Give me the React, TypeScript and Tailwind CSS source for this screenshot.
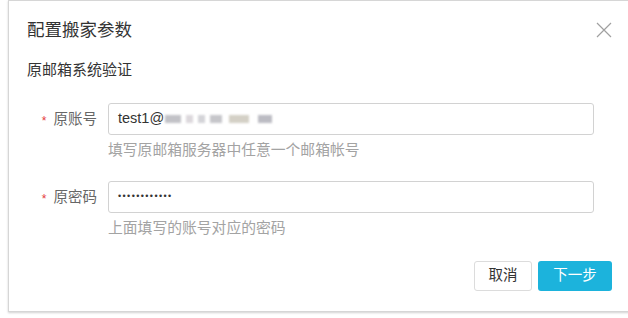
const font = "font-['Liberation_Sans','Noto_Sans_CJK_SC',sans-serif]";

function Field({
  label,
  hint,
  children,
}: {
  label: string;
  hint: string;
  children: React.ReactNode;
}) {
  return (
    <div>
      <div className="flex items-center">
        <div className="flex w-[71px] items-center justify-end gap-[7px] pr-px">
          <span className="mt-[3px] text-[12px] leading-none text-[#e4393c]">*</span>
          <span className="text-[14.5px] leading-5 text-[#666]">{label}</span>
        </div>
        <div className="ml-[10px] flex h-[32px] w-[486px] items-center rounded-[3px] border border-[#d2d2d2] bg-white px-[9px]">
          {children}
        </div>
      </div>
      <p className="ml-[81px] mt-[5px] text-[14.8px] leading-5 text-[#a3a3a3]">{hint}</p>
    </div>
  );
}

// blurred part of the sample address
const smudges = [
  { w: 'w-[16px]', c: 'bg-[#c2c2c7]' },
  { w: 'w-[7px]', c: 'bg-[#dcd8dc]' },
  { w: 'w-[7px]', c: 'bg-[#d4d4d8]' },
  { w: 'w-[12px]', c: 'bg-[#c6c6ca]' },
  { w: 'w-[20px]', c: 'bg-[#d4d0c6]' },
  { w: 'w-[14px]', c: 'bg-[#bcbcc3]' },
];

export default function App() {
  return (
    <div className={`h-[318px] w-[628px] overflow-hidden bg-white ${font}`}>
      <div className="ml-2 box-border h-[312px] w-[624px] border border-[#d6d6d6] bg-white pl-[18px] pr-[19px] pt-[17px] pb-[20px] shadow-[0_1px_2px_rgba(0,0,0,0.18)]">
        <div className="flex h-6 items-center justify-between">
          <h2 className="text-[17.5px] font-normal leading-6 text-[#333]">配置搬家参数</h2>
          <svg width="16" height="16" viewBox="0 0 16 16" className="text-[#a0a0a0]">
            <path d="M1 1L15 15M15 1L1 15" stroke="currentColor" strokeWidth="1.2" fill="none" />
          </svg>
        </div>

        <p className="mt-[18px] text-[15px] leading-5 text-[#333]">原邮箱系统验证</p>

        <div className="mt-[23px]">
          <Field label="原账号" hint="填写原邮箱服务器中任意一个邮箱帐号">
            <span className="text-[14.5px] text-[#333]">test1@</span>
            <span className="ml-px flex items-center gap-[5px] blur-[1px]">
              {smudges.map((s, i) => (
                <span key={i} className={`h-[8px] ${s.w} ${s.c} ${i === 4 ? 'ml-[2px]' : ''} ${i === 5 ? 'ml-[4px]' : ''}`} />
              ))}
            </span>
          </Field>
        </div>

        <div className="mt-[21px]">
          <Field label="原密码" hint="上面填写的账号对应的密码">
            <span className="text-[9px] tracking-[1.4px] text-[#333]">••••••••••••</span>
          </Field>
        </div>

        <div className="mt-[23px] flex justify-end gap-[6px]">
          <button
            type="button"
            className="h-[30px] w-[58px] rounded-[3px] border border-[#dcdcdc] bg-white text-[14.5px] text-[#333]"
          >
            取消
          </button>
          <button
            type="button"
            className="h-[30px] w-[74px] rounded-[3px] bg-[#1cb3dc] text-[14.5px] text-white"
          >
            下一步
          </button>
        </div>
      </div>
    </div>
  );
}
